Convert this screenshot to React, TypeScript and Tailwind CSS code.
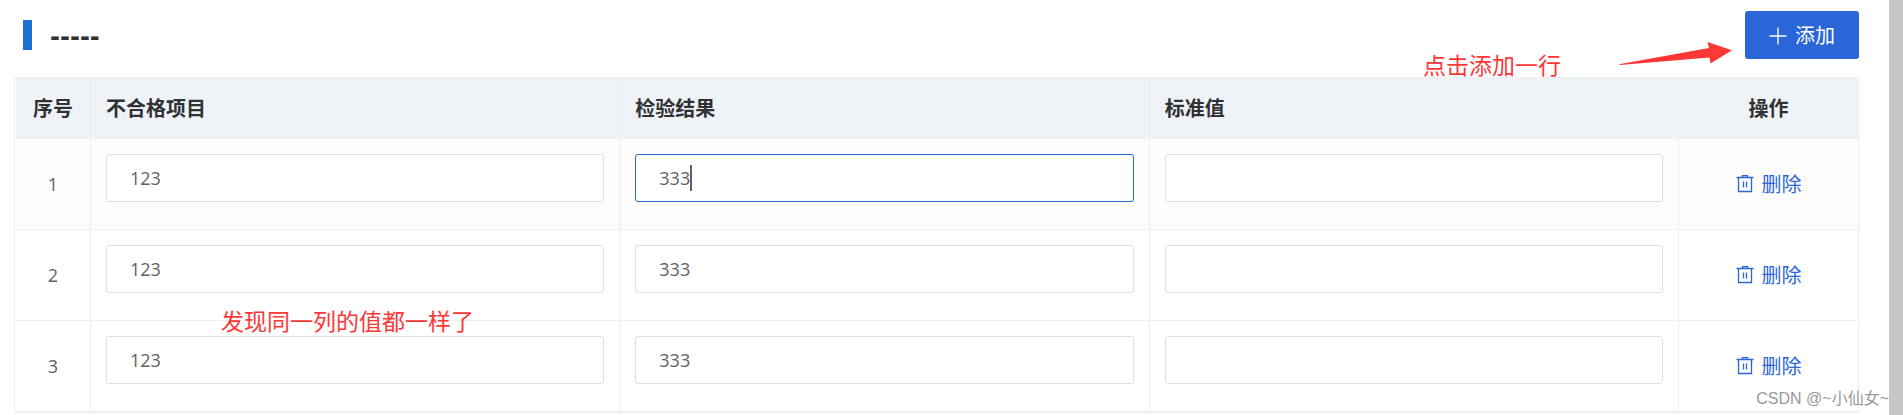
import { useState } from "react";

const columns = [
  { key: "item", title: "不合格项目" },
  { key: "result", title: "检验结果" },
  { key: "standard", title: "标准值" },
];

const cell = "border-r border-b border-[#ebeef5]";

function PlusIcon() {
  return (
    <svg viewBox="0 0 18 18" className="size-[18px]" fill="none" stroke="currentColor" strokeWidth="1.4" aria-hidden="true">
      <path d="M9 .5v17M.5 9h17" />
    </svg>
  );
}

function TrashIcon() {
  return (
    <svg viewBox="0 0 18 18" className="size-[18px]" fill="none" stroke="currentColor" strokeWidth="1.3" aria-hidden="true">
      <path d="M.5 2.500h17M2.500 2.500v14h13v-14M6.500 2.500v-2h5v2M7.500 6.500v6M10.500 6.500v6" />
    </svg>
  );
}

export default function App() {
  const [rows, setRows] = useState([1, 2, 3]);
  const [form, setForm] = useState<Record<string, string>>({ item: "123", result: "333", standard: "" });

  const addRow = () => setRows([...rows, rows.length + 1]);
  const removeRow = () => setRows(rows.slice(0, -1));

  return (
    <div className="flex min-h-screen bg-white font-['Open_Sans','Noto_Sans_CJK_SC',sans-serif] text-[#606266]">
      <main className="relative min-w-0 flex-1 pr-[30px] pl-[14px]">
        <header className="flex h-[77px] items-start justify-between">
          <div className="flex items-start pt-5 pl-[9px]">
            <span className="h-[30px] w-[9px] bg-[#1d70d6]" />
            <h2 className="ml-[18px] font-['DejaVu_Sans',sans-serif] text-2xl leading-[34px] font-bold text-[#303133]">-----</h2>
          </div>
          <button
            type="button"
            onClick={addRow}
            className="mt-[11px] flex h-12 w-[114px] items-center justify-center gap-2 rounded-[3px] bg-[#2a66d8] pt-0.5 text-xl text-white"
          >
            <PlusIcon />
            添加
          </button>
        </header>

        <div className="border-t border-b border-l border-[#ebeef5] pl-px">
          <table className="w-full table-fixed border-separate border-spacing-0">
            <colgroup>
              <col className="w-[75px]" />
              <col />
              <col />
              <col />
              <col className="w-[180px]" />
            </colgroup>
            <thead className="bg-[#eff3f8] text-xl text-[#303133]">
              <tr className="h-[61px]">
                <th scope="col" className={`${cell} pt-0.5 font-bold`}>序号</th>
                {columns.map((col) => (
                  <th key={col.key} scope="col" className={`${cell} px-[15px] pt-0.5 text-left font-bold`}>
                    {col.title}
                  </th>
                ))}
                <th scope="col" className={`${cell} pt-0.5 font-bold`}>操作</th>
              </tr>
            </thead>
            <tbody>
              {rows.map((row, index) => (
                <tr key={row} className="h-[91px] first:bg-[#fdfdfd]">
                  <td className={`${cell} text-center text-lg`}>{row}</td>
                  {columns.map((col) => {
                    const active = index === 0 && col.key === "result";
                    return (
                      <td key={col.key} className={`${cell} px-[15px] pt-[15px] pb-[27px]`}>
                        <div className="relative">
                          <input
                            type="text"
                            aria-label={`${col.title} ${row}`}
                            value={form[col.key]}
                            onChange={(e) => setForm({ ...form, [col.key]: e.target.value })}
                            className={`block h-12 w-full rounded-[3px] border bg-white px-[23px] text-lg caret-transparent outline-none ${
                              active ? "border-[#2a66d8]" : "border-[#dcdfe6]"
                            }`}
                          />
                          {active && (
                            <span className="pointer-events-none absolute inset-y-[11px] left-6 flex text-lg">
                              <span className="invisible">{form[col.key]}</span>
                              <span className="w-0.5 bg-[#606266]" />
                            </span>
                          )}
                        </div>
                      </td>
                    );
                  })}
                  <td className={cell}>
                    <button type="button" onClick={removeRow} className="mx-auto flex items-center gap-2 text-xl text-[#2a66d8]">
                      <TrashIcon />
                      <span className="pt-0.5">删除</span>
                    </button>
                  </td>
                </tr>
              ))}
            </tbody>
          </table>
        </div>

        {/* notes on top of the form */}
        <p className="absolute top-[49px] right-[328px] text-[23px] leading-8 text-[#fc3837]">点击添加一行</p>
        <svg viewBox="0 0 114 24" className="absolute top-[41px] right-[156px] h-6 w-[114px]" fill="#fc3837" aria-hidden="true">
          <path d="M0 23.2 90 7 88.500 1 113 9.300 91.500 22.500 90.500 16.500 1 24Z" />
        </svg>
        <p className="absolute top-[305px] left-[221px] text-[23px] leading-8 text-[#fc3837]">发现同一列的值都一样了</p>
        <p className="absolute right-0 bottom-1 font-['Liberation_Sans','Noto_Sans_CJK_SC',sans-serif] text-base leading-6 text-[#999]">
          CSDN @~小仙女~
        </p>
      </main>
      <div className="w-[14px] bg-[#c7c7c7]" />
    </div>
  );
}
